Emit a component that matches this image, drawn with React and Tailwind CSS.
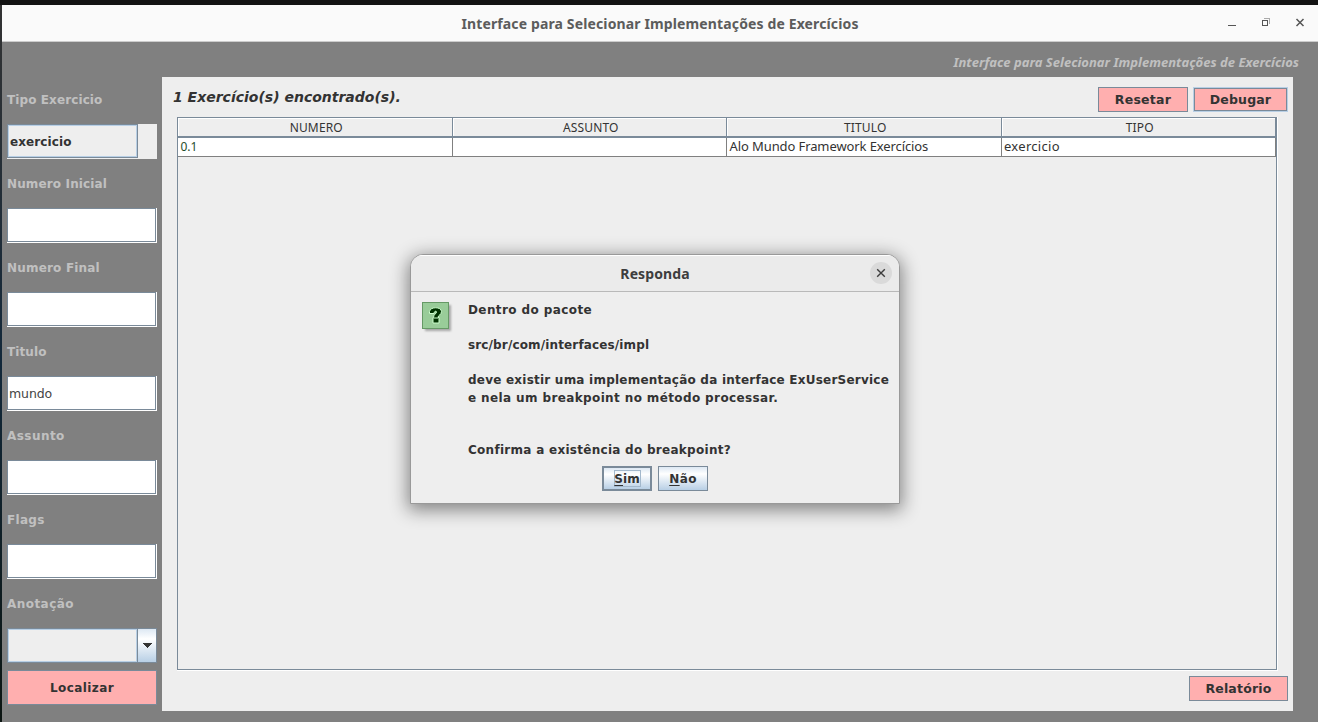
const Field = ({ children }) => (
  <div className="h-[35px] w-[150px] border-r border-b border-white">
    <div className="flex h-full items-center border border-[#7a8a99] bg-white pt-[2px] pl-px">
      <span className="text-[12.5px] font-normal tracking-[-0.1px] text-[#444]">{children}</span>
    </div>
  </div>
);

const Label = ({ children, className }) => (
  <div className="flex h-[35px] items-center text-[#c0c0c0]">
    <span className={className}>{children}</span>
  </div>
);

const columns = [
  { title: "NUMERO", value: "0.1", cell: "text-[12px] text-[#1f4d2b]" },
  { title: "ASSUNTO", value: "", cell: "" },
  { title: "TITULO", value: "Alo Mundo Framework Exercícios", cell: "text-[13px] tracking-[-0.1px]" },
  { title: "TIPO", value: "exercicio", cell: "text-[13px] tracking-[0.3px]" },
];

function TitleBar() {
  return (
    <header className="flex h-[37px] shrink-0 items-center border-b border-[#ccc] bg-[#fafafa]">
      <div className="w-[200px]" />
      <h1 className="flex-1 text-center font-['Noto_Sans',sans-serif] text-[14px] font-bold whitespace-nowrap text-[#5c5c5c]">
        <span className="tracking-[0.13px]">Interface para Selecionar Implementações de Exercícios</span>
      </h1>
      <div className="flex w-[200px] justify-end pr-[13px]">
        <svg width="78" height="12" viewBox="0 0 78 12" fill="none" shapeRendering="crispEdges">
          <path d="M1 8.500h8" stroke="#555" />
          <path d="M37 1.500h5.500v5.500" stroke="#aaa" />
          <path d="M35.500 3.500h5v5h-5z" stroke="#555" />
          <path d="M69.500 2l7 7M76.500 2l-7 7" stroke="#555" strokeWidth="1.500" shapeRendering="geometricPrecision" />
        </svg>
      </div>
    </header>
  );
}

function Sidebar() {
  return (
    <aside className="flex w-[160px] shrink-0 flex-col gap-[7px] pt-[40px] pl-[5px] tracking-[0.1px]">
      <Label>Tipo Exercicio</Label>
      <div className="flex h-[35px] w-[150px] bg-[#eee]">
        <div className="flex h-[34px] w-[131px] items-center border border-[#7a8a99] pt-px shadow-[inset_0_0_0_1px_#b8cfe5]">
          <span className="pl-[2px]">exercicio</span>
        </div>
      </div>
      <Label className="tracking-[0.14px]">Numero Inicial</Label>
      <Field />
      <Label className="tracking-[0.19px]">Numero Final</Label>
      <Field />
      <Label>Titulo</Label>
      <Field>mundo</Field>
      <Label className="tracking-[0.45px]">Assunto</Label>
      <Field />
      <Label className="tracking-[0.3px]">Flags</Label>
      <Field />
      <Label className="tracking-[0.45px]">Anotação</Label>
      <div className="h-[35px] w-[150px]">
        <div className="flex h-[35px] border border-[#7a8a99] bg-[#eee]">
          <div className="w-[129px] border border-[#b8cfe5]" />
          <div className="flex flex-1 items-center justify-center border-l border-[#7a8a99] bg-linear-to-b from-[#dde8f3] via-white via-30% to-[#b8cfe5]">
            <svg width="10" height="5" viewBox="0 0 10 5" shapeRendering="crispEdges">
              <path d="M0 0h10L5 5z" fill="#333" />
            </svg>
          </div>
        </div>
      </div>
      <button className="h-[35px] w-[150px] border border-[#7a8a99] bg-[#ffafaf] tracking-[0.4px]">Localizar</button>
    </aside>
  );
}

function Results() {
  return (
    <div className="h-[554px] w-[1101px] shrink-0 border-r border-b border-white">
      <div className="h-full border border-[#7a8a99] font-['Noto_Sans',sans-serif] text-[12px] font-normal">
        <div className="flex h-[20px] w-[1098px]">
          {columns.map((c) => (
            <div key={c.title} className="h-full flex-1 border-r border-b-2 border-[#7a8a99]">
              <div className="flex h-full items-center justify-center border-t border-l border-white pt-px pl-[2px] tracking-[0.15px]">
                {c.title}
              </div>
            </div>
          ))}
        </div>
        <div className="flex h-[19px] w-[1098px] bg-white">
          {columns.map((c) => (
            <div key={c.title} className="flex flex-1 items-center border-r border-b border-[#808080] pl-[2.5px]">
              <span className={c.cell}>{c.value}</span>
            </div>
          ))}
        </div>
      </div>
    </div>
  );
}

function Dialog() {
  return (
    <div
      role="dialog"
      className="absolute top-[254px] left-[410px] flex h-[250px] w-[490px] flex-col overflow-hidden rounded-t-[13px] border border-[#999] bg-[#eee] shadow-[0_4px_18px_2px_rgba(0,0,0,0.45)]"
    >
      <div className="flex h-[37px] shrink-0 items-center border-t border-b border-t-white border-b-[#b9b9b9] bg-[#ebebeb]">
        <div className="w-[40px]" />
        <h2 className="flex-1 text-center font-['Noto_Sans',sans-serif] text-[14px] font-bold tracking-[0.1px] text-[#3d3d3d]">Responda</h2>
        <div className="flex w-[40px] justify-end pr-[7px] pb-px">
          <div className="flex size-[22px] items-center justify-center rounded-full bg-[#dadada]">
            <svg width="10" height="10" viewBox="0 0 10 10" stroke="#3d3d3d" strokeWidth="1.400">
              <path d="M1.200 1.200l7.600 7.600M8.800 1.200l-7.600 7.600" />
            </svg>
          </div>
        </div>
      </div>
      <div className="flex pt-[10px] pl-[11px]">
        <svg width="34" height="34" viewBox="0 0 34 34" className="shrink-0">
          <defs>
            <filter id="soft" x="-20%" y="-20%" width="150%" height="150%">
              <feGaussianBlur stdDeviation="1.300" />
            </filter>
          </defs>
          <rect x="3" y="3" width="26" height="26" fill="#777" opacity=".6" filter="url(#soft)" />
          <rect x=".5" y=".5" width="26" height="26" fill="#99cc99" stroke="#669966" />
          <path d="M7.500 11.500V9.500C8 4.500 19.500 4.500 19.500 9.500c0 3.500-3.500 3.500-3.500 6h1v5.500h-6v-5.500h0.500c0-3 3-4 3-5.500 0-1.300-2.500-1-2.500 1.500z" fill="#003300" stroke="#ccffcc" strokeWidth="1" />
          <path d="M11.500 16h4.500" stroke="#ccffcc" strokeWidth="1" />
        </svg>
        <div className="ml-[12px] leading-[17.500px] whitespace-nowrap">
          <p className="tracking-[0.4px]">Dentro do pacote</p>
          <p className="mt-[17.500px] tracking-[0.14px]">src/br/com/interfaces/impl</p>
          <p className="mt-[17.500px] tracking-[0.225px]">deve existir uma implementação da interface ExUserService</p>
          <p className="tracking-[0.38px]">e nela um breakpoint no método processar.</p>
          <p className="mt-[35px] tracking-[0.28px]">Confirma a existência do breakpoint?</p>
        </div>
      </div>
      <div className="mt-[6px] flex justify-center gap-[6px]">
        <button className="flex h-[25px] w-[50px] items-center justify-center border-2 border-[#7a8a99] bg-linear-to-b from-[#dde8f3] via-white via-30% to-[#b8cfe5]">
          <span className="flex h-[17px] w-[27px] items-center justify-center border border-[#a3b8cc] pt-px">
            <u className="underline-offset-2">S</u>im
          </span>
        </button>
        <button className="h-[25px] w-[50px] border border-[#7a8a99] bg-linear-to-b from-[#dde8f3] via-white via-30% to-[#b8cfe5] pt-px tracking-[0.4px]">
          <u className="underline-offset-2">N</u>ão
        </button>
      </div>
    </div>
  );
}

export default function App() {
  return (
    <div className="relative flex h-[722px] w-[1318px] overflow-hidden bg-[#131313] pt-[5px] font-['DejaVu_Sans',sans-serif] text-[12px] font-bold text-[#333]">
      <div className="w-[2px] shrink-0 bg-linear-to-b from-[#333] via-[#12283a] to-[#0c1512]" />
      <div className="flex flex-1 flex-col bg-[#808080]">
        <TitleBar />
        <div className="flex flex-1">
          <Sidebar />
          <div className="flex-1">
            <p className="flex h-[35px] items-center justify-end pt-[6px] pr-[19px] font-['Noto_Sans',sans-serif] text-[13px] text-[#c0c0c0] italic">
              <span className="tracking-[0.02px] whitespace-nowrap">Interface para Selecionar Implementações de Exercícios</span>
            </p>
            <main className="flex h-[634px] w-[1131px] flex-col bg-[#eee] pl-[15px]">
              <div className="flex h-[40px] items-start pt-[10px] pr-[5px]">
                <h3 className="-ml-[4px] flex-1 text-[14px] leading-5 italic">
                  <span>1 Exercício(s) encontrado(s).</span>
                </h3>
                <button className="h-[25px] w-[90px] border border-[#7a8a99] bg-[#ffafaf] pt-px text-[12.5px] tracking-[0.25px]">Resetar</button>
                <div className="ml-[5px] border border-[#b8cfe5]">
                  <button className="block h-[23px] w-[93px] border border-[#7a8a99] bg-[#ffafaf] pt-px text-[12.5px] tracking-[0.15px]">Debugar</button>
                </div>
              </div>
              <Results />
              <button className="mt-[5px] mr-[5px] h-[25px] w-[99px] self-end border border-[#7a8a99] bg-[#ffafaf] pt-px text-[12.5px] tracking-[0.2px]">
                Relatório
              </button>
            </main>
          </div>
        </div>
      </div>
      <Dialog />
    </div>
  );
}
